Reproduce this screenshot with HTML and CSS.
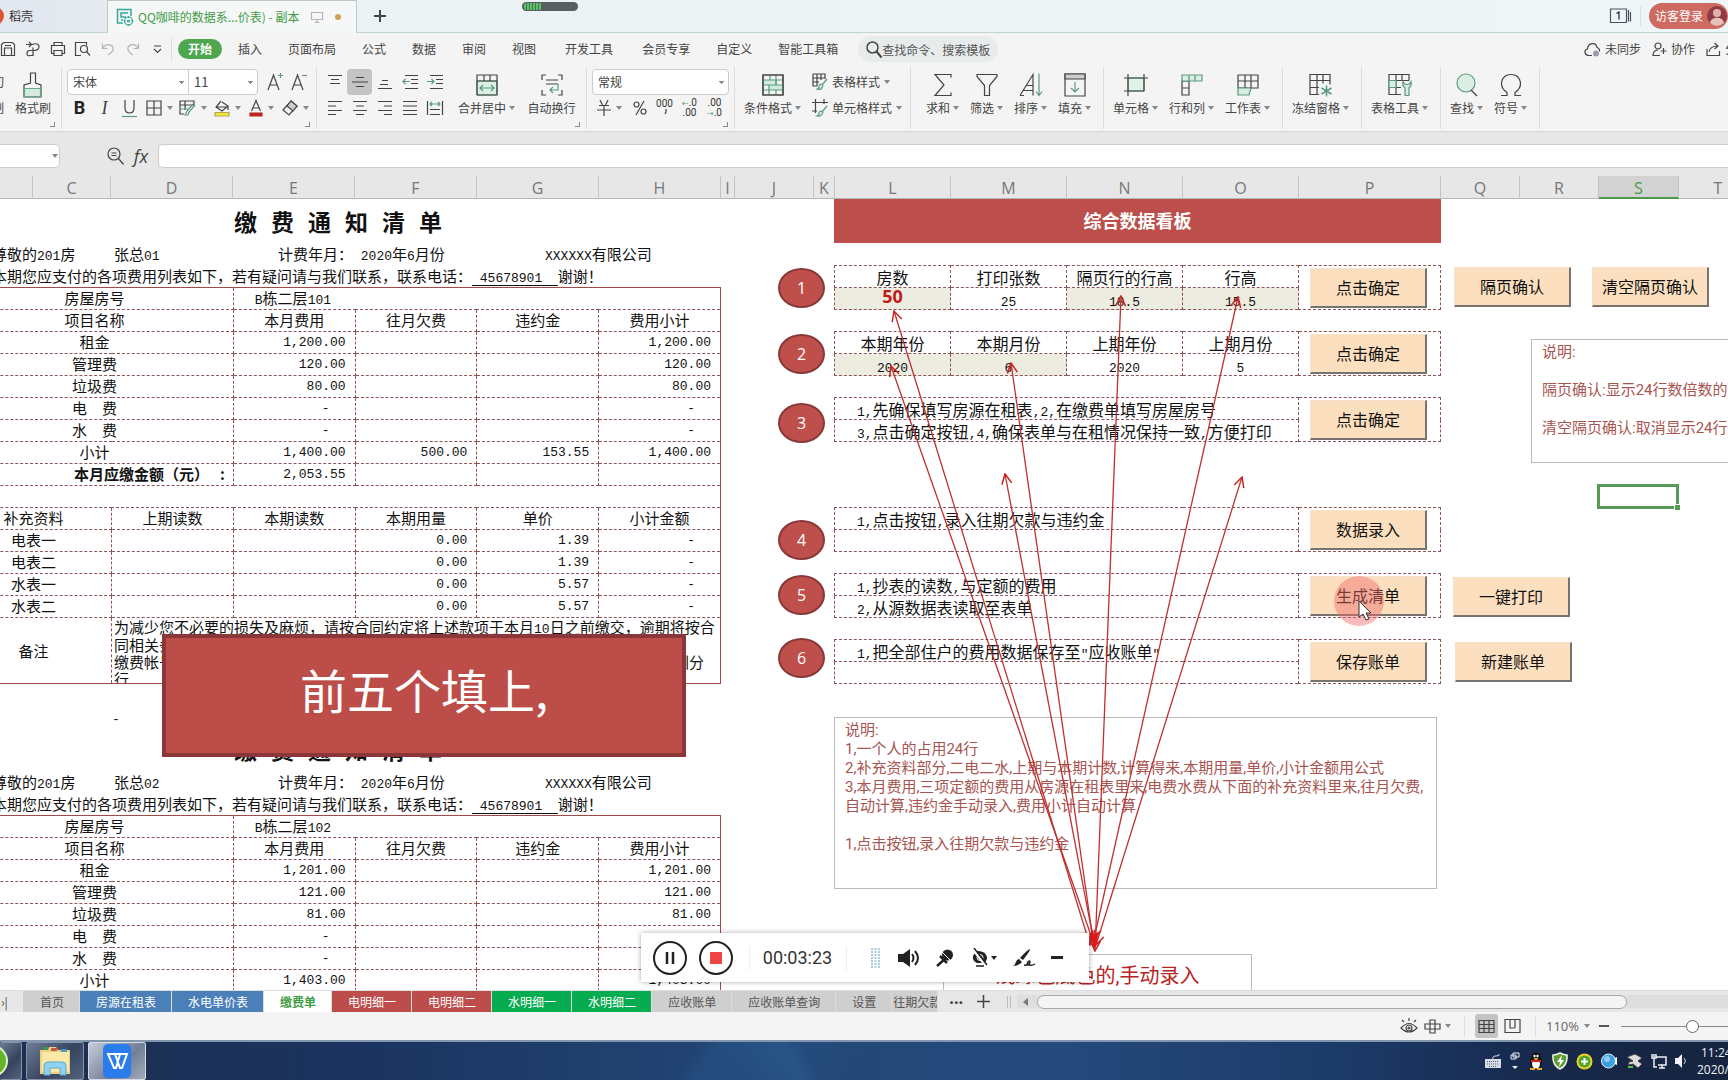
FILE: index.html
```html
<!DOCTYPE html>
<html lang="zh-CN">
<head>
<meta charset="utf-8">
<title>QQ咖啡的数据系统 - 缴费单</title>
<link rel="stylesheet" href="styles.css">
</head>
<body>
<div class="app">

<header class="titlebar">
  <div class="doc-tab docer"><svg width="8" height="18"><circle cx="-5" cy="9" r="9" fill="#e0522b"/></svg><span>稻壳</span></div>
  <div class="doc-tab current">
    <svg class="ic teal" width="18" height="18" viewBox="0 0 18 18"><path d="M7 15H1.500V1.500H15V8M12 5H5v4h5M5 12h2" stroke-width="1.500"/><circle cx="12.500" cy="13" r="4"/><circle cx="12.500" cy="13" r="1"/><path d="M12.500 8v2M12.500 16v2M7.500 13h2M15.500 13h2"/></svg>
    <span>QQ咖啡的数据系...价表) - 副本</span>
    <svg class="ic faint" width="12" height="12" viewBox="0 0 12 12"><path d="M.5 1.500h11v7H.5zM6 8.500v3M3.500 11.500h5"/></svg>
    <i class="unsaved"></i>
  </div>
  <button class="new-tab" aria-label="新建标签"><svg class="ic" width="14" height="14" viewBox="0 0 14 14"><path d="M7 1v12M1 7h12" stroke-width="2"/></svg></button>
  <div class="window-tools">
    <svg class="ic" width="22" height="16" viewBox="0 0 22 16"><path d="M.5 1h16v13.500h-16zM18.500 2v11.500M20.500 4v9.500" stroke="#455560"/><path d="M6.500 5.500 9 4v7.500" stroke="#222"/></svg>
    <i class="vline"></i>
    <button class="login">访客登录<svg width="20" height="20" viewBox="0 0 20 20"><circle cx="10" cy="10" r="10" fill="#8d3d43"/><circle cx="10" cy="7" r="4" fill="#e3b0ac"/><path d="M3 17c1-7 13-7 14 0q-7 6-14 0" fill="#e9bfbb"/></svg></button>
  </div>
</header>
<div class="capsule"><i></i></div>

<nav class="menubar">
  <div class="quick">
    <button aria-label="保存"><svg class="ic" width="16" height="16" viewBox="0 0 16 16"><path d="M1.500 14.500v-11l2-2h9l2 2v11zM4.500 14v-7h7v7M5 4.500h6"/></svg></button>
    <button aria-label="输出"><svg class="ic" width="16" height="16" viewBox="0 0 16 16"><path d="M1 3.500h5M4 1l2.500 2.500L4 6M7 3.500C16 0 16 10 9 9.500H5q-3 0-3 3t3 2h3V6.500"/></svg></button>
    <button aria-label="打印"><svg class="ic" width="16" height="16" viewBox="0 0 16 16"><path d="M4 4.500v-3h8v3M4 12.500H1.500v-8h13v8H12M4 9.500h8v5H4z"/></svg></button>
    <button aria-label="打印预览"><svg class="ic" width="17" height="16" viewBox="0 0 17 16"><path d="M7 14.500H1.500v-13h11V4"/><circle cx="10" cy="8" r="3.500"/><path d="m12.500 10.500 3.500 4"/></svg></button>
    <button aria-label="撤销" disabled><svg class="ic faint" width="14" height="14" viewBox="0 0 14 14"><path d="M1.500 1.500v5h5M2 6C6 0 13 3 12 8q-1 3-5 5"/></svg></button>
    <button aria-label="恢复" disabled><svg class="ic faint" width="14" height="14" viewBox="0 0 14 14"><path d="M12.500 1.500v5h-5M12 6C8 0 1 3 2 8q1 3 5 5"/></svg></button>
    <button aria-label="自定义快速访问"><svg class="ic" width="9" height="9" viewBox="0 0 9 9"><path d="M1 1h7M1 4l3.500 3.500L8 4"/></svg></button>
  </div>
  <div class="menus">
    <a class="on" href="#">开始</a><a href="#">插入</a><a href="#">页面布局</a><a href="#">公式</a><a href="#">数据</a><a href="#">审阅</a><a href="#">视图</a><a class="far" href="#">开发工具</a><a class="far" href="#">会员专享</a><a href="#">自定义</a><a href="#">智能工具箱</a>
  </div>
  <label class="search"><svg class="ic" width="16" height="17" viewBox="0 0 16 17"><circle cx="6.500" cy="6.500" r="5.500" stroke-width="1.500"/><path d="m10.500 10.500 5 6" stroke-width="2"/></svg><input type="text" placeholder="查找命令、搜索模板" aria-label="查找命令、搜索模板"></label>
  <div class="share">
    <a href="#"><svg class="ic" width="17" height="15" viewBox="0 0 17 15"><path d="M8 13.500H4.500C0 13 0 7.500 3.500 7 4 0 12 0 13 5.500q3 1 2.500 4"/><circle cx="12" cy="11.500" r="3" fill="#99a" stroke="none"/></svg>未同步</a>
    <a href="#"><svg class="ic" width="15" height="15" viewBox="0 0 15 15"><circle cx="6" cy="4" r="3"/><path d="M8 13.500H1q0-5 5-5.500M11.500 6v6M8.500 9h6"/></svg>协作</a>
    <a href="#"><svg class="ic" width="15" height="15" viewBox="0 0 15 15"><path d="M1 7v6.500h12.500V9M3 10Q4 4 11.500 4M8.500 1l3.500 3-3.500 3"/></svg>分享</a>
  </div>
</nav>

<section class="ribbon">
  <div class="group g-clip">
    <div class="cut-off"><span>切</span><span>制</span></div>
    <button class="big"><svg class="ic" width="20" height="26" viewBox="0 0 20 26"><path d="M7.500 1h5v10l5.500 2v12H1V13l6.500-2z"/><path d="M1.500 16.500h16v8h-16z" fill="#d5ebdf" stroke="#6ba58b"/></svg><span>格式刷</span></button>
    <i class="corner"></i>
  </div>
  <div class="group g-font">
    <div class="line">
      <select class="font-name" aria-label="字体"><option>宋体</option></select><select class="font-size" aria-label="字号"><option>11</option></select>
      <button class="glyph" aria-label="增大字号"><svg class="ic" width="17" height="18" viewBox="0 0 17 18"><path d="M1 17 6.500 2 12 17M3 12h7"/><path class="gr" d="M13.500 0v5M11 2.500h5"/></svg></button>
      <button class="glyph" aria-label="减小字号"><svg class="ic" width="17" height="18" viewBox="0 0 17 18"><path d="M1 17 6.500 2 12 17M3 12h7"/><path class="gr" d="M11 2.500h5"/></svg></button>
    </div>
    <div class="line tools">
      <button class="bold">B</button>
      <button class="italic">I</button>
      <button aria-label="下划线"><svg class="ic" width="15" height="17" viewBox="0 0 15 17"><path d="M3 0v8q0 5 4.500 5T12 8V0"/><path class="gr" d="M0 16.500h15"/></svg></button>
      <button class="drop" aria-label="边框"><svg class="ic" width="16" height="16" viewBox="0 0 16 16"><path d="M1 1h14v14H1zM8 1v14M1 8h14"/></svg><i class="caret"></i></button>
      <button class="drop" aria-label="表格样式"><svg class="ic" width="17" height="16" viewBox="0 0 17 16"><path d="M10 1H1v13h4M1 5h14V1H6v9"/><path class="gr" d="m16 5-6 7-1 3-3 0 2-4 6-7M2 9h7"/></svg><i class="caret"></i></button>
      <button class="drop" aria-label="填充颜色"><svg class="ic" width="16" height="17" viewBox="0 0 16 17"><path d="M7 1 2 7l6 4 6-5-6-4M2 7h11M14 6v4"/><path d="M1 12.500h14V16H1z" fill="#f0e840" stroke="#b3a94c"/></svg><i class="caret"></i></button>
      <button class="drop" aria-label="字体颜色"><svg class="ic" width="14" height="17" viewBox="0 0 14 17"><path d="M2.500 11 7 .500 11.500 11M4 8h6"/><path d="M1 13h12v3H1z" fill="#b92727" stroke="#b92727"/></svg><i class="caret"></i></button>
      <button class="drop" aria-label="清除"><svg class="ic" width="16" height="16" viewBox="0 0 16 16"><path d="m9 1 6 5-8 9-6-5z"/><path d="m9 1 6 5-4 5-6-5z" fill="#ccc"/></svg><i class="caret"></i></button>
    </div>
    <i class="corner"></i>
  </div>
  <div class="group g-align">
    <div class="align-grid">
      <button aria-label="顶端对齐"><svg class="ic" width="16" height="16" viewBox="0 0 16 16"><path d="M1 1.500h14M4 5.500h8M3 9.500h10" /></svg></button>
      <button class="pressed" aria-label="垂直居中"><svg class="ic" width="16" height="16" viewBox="0 0 16 16"><path d="M4 3.500h8M0 8h16M4 12.500h8"/></svg></button>
      <button aria-label="底端对齐"><svg class="ic" width="16" height="16" viewBox="0 0 16 16"><path d="M5 6.500h6M3 10.500h8M1 14.500h14"/></svg></button>
      <button aria-label="减少缩进"><svg class="ic" width="16" height="16" viewBox="0 0 16 16"><path d="M3 1.500h13M9 5.500h7M9 9.500h7M3 14.500h13"/><path class="gr" d="M8 7.500H1M3.500 5 1 7.500 3.500 10"/></svg></button>
      <button aria-label="增加缩进"><svg class="ic" width="16" height="16" viewBox="0 0 16 16"><path d="M3 1.500h13M9 5.500h7M9 9.500h7M3 14.500h13"/><path class="gr" d="M0 7.500h7M4.500 5 7 7.500 4.500 10"/></svg></button>
      <button aria-label="左对齐"><svg class="ic" width="16" height="16" viewBox="0 0 16 16"><path d="M1 1.500h14M1 6h8M1 10.500h14M1 14.500h8"/></svg></button>
      <button aria-label="水平居中"><svg class="ic" width="16" height="16" viewBox="0 0 16 16"><path d="M1 1.500h14M4 6h8M1 10.500h14M4 14.500h8"/></svg></button>
      <button aria-label="右对齐"><svg class="ic" width="16" height="16" viewBox="0 0 16 16"><path d="M1 1.500h14M7 6h8M1 10.500h14M7 14.500h8"/></svg></button>
      <button aria-label="两端对齐"><svg class="ic" width="16" height="16" viewBox="0 0 16 16"><path d="M1 1.500h14M1 6h14M1 10.500h14M1 14.500h14"/></svg></button>
      <button aria-label="分散对齐"><svg class="ic" width="16" height="16" viewBox="0 0 16 16"><path d="M.5 1v14M15.500 1v14M3 9.500h10M3 14.500h10"/><path class="gr" d="M3 4h10M5 2 3 4l2 2M11 2l2 2-2 2"/></svg></button>
    </div>
    <button class="big"><svg class="ic" width="22" height="22" viewBox="0 0 22 22"><path d="M1 7h20v14H1z" fill="#dcefe5" class="gr"/><path d="M1 21V1h20v20M1 7h20M8 1v6M14 1v6M1 21h20"/><path class="gr" d="M4 14h14M7 11l-3 3 3 3M15 11l3 3-3 3"/></svg><span>合并居中<i class="caret"></i></span></button>
    <button class="big wrap-text"><svg class="ic" width="22" height="22" viewBox="0 0 22 22"><path d="M5 1H1v5M17 1h4v5M5 21H1v-5M17 21h4v-5M5 6h12M5 10h12"/><path class="gr" d="M17 10v6H9M12 13l-3 3 3 3"/></svg><span>自动换行</span></button>
    <i class="corner"></i>
  </div>
  <div class="group g-number">
    <div class="line"><select class="num-format" aria-label="数字格式"><option>常规</option></select></div>
    <div class="line numtools">
      <button class="drop" aria-label="货币"><svg class="ic" width="14" height="16" viewBox="0 0 14 16"><path d="m3 0 2.500 5M11 0 8.500 5M2 5.500h10M0 10h14M7 5.500V16"/></svg><i class="caret"></i></button>
      <button aria-label="百分比"><svg class="ic" width="14" height="14" viewBox="0 0 14 14"><circle cx="3.500" cy="3.500" r="2.500"/><circle cx="10.500" cy="10.500" r="2.500"/><path d="M11 0 3 14"/></svg></button>
      <button class="digits" aria-label="千位分隔"><span>000</span><svg class="ic" width="4" height="8"><path d="M3 0v3L2 5"/></svg></button>
      <button class="digits" aria-label="增加小数位"><span><em>←</em>.0</span><span>.00</span></button>
      <button class="digits" aria-label="减少小数位"><span>.00</span><span><em>→</em>.0</span></button>
    </div>
    <i class="corner"></i>
  </div>
  <div class="group g-style">
    <button class="big"><svg class="ic" width="22" height="22" viewBox="0 0 22 22"><path d="M1 1h20v20H1z"/><path d="M1 6h13v5H1zM7 11h14v5H7z" fill="#d0ebdc" class="gr"/><path class="gr" d="M8 1v5M14 1v5h7M14 11V6M7 16v5M14 16v5M1 16h6"/><path d="M1 1h20v20H1z"/></svg><span>条件格式<i class="caret"></i></span></button>
    <div class="stack">
      <button class="drop"><svg class="ic" width="16" height="18" viewBox="0 0 16 18"><path d="M1 1h12v5M1 1v12h4M1 5h12M1 9h6M5 1v12M9 1v6"/><path class="gr" d="m15 6-5 6M10 11q-4 0-3 4l-2 1q5 2 6-4" fill="#d0ebdc"/></svg>表格样式<i class="caret"></i></button>
      <button class="drop"><svg class="ic" width="16" height="18" viewBox="0 0 16 18"><path d="M3.500 0v14M0 3.500h16M12 0v5M0 12h5"/><path class="gr" d="m15 7-5 6M10 12q-4 0-3 4l-2 1q5 1 6-4" fill="#d0ebdc"/></svg>单元格样式<i class="caret"></i></button>
    </div>
  </div>
  <div class="group g-data">
    <button class="big"><svg class="ic" width="18" height="23" viewBox="0 0 18 23"><path d="M17 4V1H1l9 10.500L1 22h16v-3"/></svg><span>求和<i class="caret"></i></span></button>
    <button class="big"><svg class="ic" width="22" height="23" viewBox="0 0 22 23"><path d="M1 1h20v2l-7.500 9v10h-5V12L1 3z"/></svg><span>筛选<i class="caret"></i></span></button>
    <button class="big"><svg class="ic" width="24" height="23" viewBox="0 0 24 23"><path d="M1 22 14 1v21M4 17h10M7 12h7M1 22h4"/><path class="gr" d="M20 0v22M17 18l3 4 3-4"/></svg><span>排序<i class="caret"></i></span></button>
    <button class="big"><svg class="ic" width="22" height="24" viewBox="0 0 22 24"><path d="M1 1h20v22H1z"/><path d="M1 1h20v5H1z" fill="#ccc"/><path class="gr" d="M11 9v10M7 15l4 4 4-4"/></svg><span>填充<i class="caret"></i></span></button>
  </div>
  <div class="group g-cells">
    <button class="big"><svg class="ic" width="24" height="22" viewBox="0 0 24 22"><path d="M4 4h16v13H4z" fill="#e0f1e8" class="gr"/><path d="M4 0v22M0 4h24M0 17h20M20 0v17"/></svg><span>单元格<i class="caret"></i></span></button>
    <button class="big"><svg class="ic" width="22" height="22" viewBox="0 0 22 22"><path d="M1 7h7v14H1zM1 14h7"/><path d="M1 1h20v6H1zM8 1v6M14 1v6" fill="#d8eee2" class="gr"/></svg><span>行和列<i class="caret"></i></span></button>
    <button class="big"><svg class="ic" width="22" height="22" viewBox="0 0 22 22"><path d="M1 14V1h20v13zM1 7h20M8 1v13M14 1v13"/><path d="M1 14h13l-2 7H1z" fill="#d8eee2" class="gr"/></svg><span>工作表<i class="caret"></i></span></button>
  </div>
  <div class="group g-one">
    <button class="big"><svg class="ic" width="24" height="23" viewBox="0 0 24 23"><path d="M21 11V1H1v20h9M1 7h20M1 14h9M8 1v20M14 1v9"/><path class="gr" d="M17.500 12v11M12.500 14.500l10 6M22.500 14.500l-10 6" stroke-width="1.500"/></svg><span>冻结窗格<i class="caret"></i></span></button>
  </div>
  <div class="group g-one">
    <button class="big"><svg class="ic" width="24" height="23" viewBox="0 0 24 23"><path d="M21 7V1H1v20h12M1 7h20M8 1v20M14 1v6M1 14h12"/><path d="M1 7h7v7H1z" fill="#d8eee2" class="gr"/><path d="M15 8q-1 5 2 6v8h4v-8q3-1 2-6l-2 3h-4z" fill="#d8eee2" class="gr"/></svg><span>表格工具<i class="caret"></i></span></button>
  </div>
  <div class="group g-find">
    <button class="big"><svg class="ic" width="22" height="24" viewBox="0 0 22 24"><circle cx="10" cy="10" r="9" fill="#dcefe5" class="gr"/><path d="m15 17 6 6"/></svg><span>查找<i class="caret"></i></span></button>
    <button class="big"><svg class="ic" width="22" height="23" viewBox="0 0 22 23"><path d="M1 22h6v-3Q1 15 1.500 9 3 1 11 1t9.500 8q.5 6-5.500 10v3h6"/></svg><span>符号<i class="caret"></i></span></button>
  </div>
</section>

<section class="formula">
  <input class="name-box" type="text" aria-label="名称框"><i class="caret"></i>
  <svg class="ic" width="17" height="18" viewBox="0 0 17 18"><circle cx="7" cy="7" r="6"/><path d="m11.500 11.500 5 6M4.500 6h5M4.500 8.500h5"/></svg>
  <button class="fx">fx</button>
  <input class="formula-input" type="text" aria-label="编辑栏">
</section>

<div class="col-heads">
  <span></span><span>C</span><span>D</span><span>E</span><span>F</span><span>G</span><span>H</span><span>I</span><span>J</span><span>K</span><span>L</span><span>M</span><span>N</span><span>O</span><span>P</span><span>Q</span><span>R</span><span class="sel">S</span><span>T</span>
</div>

<main class="sheet">
  <div class="bills">
    <article class="bill">
      <h2>缴费通知清单</h2>
      <div class="meta"><span>尊敬的<b>201</b>房</span><span>张总<b>01</b></span><span>计费年月：<b> 2020</b>年<b>6</b>月份</span><span><b>XXXXXX</b>有限公司</span></div>
      <div class="meta"><span class="whole">本期您应支付的各项费用列表如下，若有疑问请与我们联系，联系电话：<u><b> 45678901  </b></u>谢谢！</span></div>
      <table>
        <colgroup><col class="c-first"><col><col><col><col><col></colgroup>
        <tr><td colspan="2">房屋房号</td><td colspan="4" class="room"><b>B</b>栋二层<b>101</b></td></tr>
        <tr><td colspan="2">项目名称</td><td>本月费用</td><td>往月欠费</td><td>违约金</td><td>费用小计</td></tr>
        <tr><td colspan="2">租金</td><td class="num">1,200.00</td><td></td><td></td><td class="num">1,200.00</td></tr>
        <tr><td colspan="2">管理费</td><td class="num">120.00</td><td></td><td></td><td class="num">120.00</td></tr>
        <tr><td colspan="2">垃圾费</td><td class="num">80.00</td><td></td><td></td><td class="num">80.00</td></tr>
        <tr><td colspan="2">电　费</td><td class="num nil">-</td><td></td><td></td><td class="num nil">-</td></tr>
        <tr><td colspan="2">水　费</td><td class="num nil">-</td><td></td><td></td><td class="num nil">-</td></tr>
        <tr><td colspan="2">小计</td><td class="num">1,400.00</td><td class="num">500.00</td><td class="num">153.55</td><td class="num">1,400.00</td></tr>
        <tr><td colspan="2" class="due">本月应缴金额（元）　 :</td><td class="num">2,053.55</td><td></td><td></td><td></td></tr>
        <tr><td colspan="6"></td></tr>
        <tr><td>补充资料</td><td>上期读数</td><td>本期读数</td><td>本期用量</td><td>单价</td><td>小计金额</td></tr>
        <tr><td>电表一</td><td></td><td></td><td class="num">0.00</td><td class="num">1.39</td><td class="num nil">-</td></tr>
        <tr><td>电表二</td><td></td><td></td><td class="num">0.00</td><td class="num">1.39</td><td class="num nil">-</td></tr>
        <tr><td>水表一</td><td></td><td></td><td class="num">0.00</td><td class="num">5.57</td><td class="num nil">-</td></tr>
        <tr><td>水表二</td><td></td><td></td><td class="num">0.00</td><td class="num">5.57</td><td class="num nil">-</td></tr>
        <tr><td class="note-label">备注</td><td colspan="5" class="note"><div><p>为减少您不必要的损失及麻烦，请按合同约定将上述款项于本月<b>10</b>日之前缴交，逾期将按合</p><p>同相关条款</p><p class="bank"><span>缴费帐号</span><span>深圳分</span></p><p>行</p></div></td></tr>
      </table>
      <p class="tail"><b>-</b></p>
    </article>
    <article class="bill">
      <h2>缴费通知清单</h2>
      <div class="meta"><span>尊敬的<b>201</b>房</span><span>张总<b>02</b></span><span>计费年月：<b> 2020</b>年<b>6</b>月份</span><span><b>XXXXXX</b>有限公司</span></div>
      <div class="meta"><span class="whole">本期您应支付的各项费用列表如下，若有疑问请与我们联系，联系电话：<u><b> 45678901  </b></u>谢谢！</span></div>
      <table>
        <colgroup><col class="c-first"><col><col><col><col><col></colgroup>
        <tr><td colspan="2">房屋房号</td><td colspan="4" class="room"><b>B</b>栋二层<b>102</b></td></tr>
        <tr><td colspan="2">项目名称</td><td>本月费用</td><td>往月欠费</td><td>违约金</td><td>费用小计</td></tr>
        <tr><td colspan="2">租金</td><td class="num">1,201.00</td><td></td><td></td><td class="num">1,201.00</td></tr>
        <tr><td colspan="2">管理费</td><td class="num">121.00</td><td></td><td></td><td class="num">121.00</td></tr>
        <tr><td colspan="2">垃圾费</td><td class="num">81.00</td><td></td><td></td><td class="num">81.00</td></tr>
        <tr><td colspan="2">电　费</td><td class="num nil">-</td><td></td><td></td><td class="num nil">-</td></tr>
        <tr><td colspan="2">水　费</td><td class="num nil">-</td><td></td><td></td><td class="num nil">-</td></tr>
        <tr><td colspan="2">小计</td><td class="num">1,403.00</td><td></td><td></td><td class="num">1,403.00</td></tr>
      </table>
    </article>
  </div>

  <div class="panel">
    <h1>综合数据看板</h1>
    <table>
      <colgroup><col><col><col><col><col class="c-act"></colgroup>
      <tr><td>房数</td><td>打印张数</td><td>隔页行的行高</td><td>行高</td><td rowspan="2" class="act"><button class="ole">点击确定</button></td></tr>
      <tr><td class="fill hot">50</td><td><b>25</b></td><td class="fill"><b>18.5</b></td><td class="fill"><b>15.5</b></td></tr>
    </table>
    <table>
      <colgroup><col><col><col><col><col class="c-act"></colgroup>
      <tr><td>本期年份</td><td>本期月份</td><td>上期年份</td><td>上期月份</td><td rowspan="2" class="act"><button class="ole">点击确定</button></td></tr>
      <tr><td class="fill"><b>2020</b></td><td class="fill"><b>6</b></td><td><b>2020</b></td><td><b>5</b></td></tr>
    </table>
    <table class="before-gap">
      <colgroup><col><col><col><col><col class="c-act"></colgroup>
      <tr><td colspan="4" class="step"><b>1,</b>先确保填写房源在租表<b>,2,</b>在缴费单填写房屋房号</td><td rowspan="2" class="act"><button class="ole">点击确定</button></td></tr>
      <tr><td colspan="4" class="step"><b>3,</b>点击确定按钮<b>,4,</b>确保表单与在租情况保持一致<b>,</b>方便打印</td></tr>
    </table>
    <table>
      <colgroup><col><col><col><col><col class="c-act"></colgroup>
      <tr><td colspan="4" class="step"><b>1,</b>点击按钮<b>,</b>录入往期欠款与违约金</td><td rowspan="2" class="act"><button class="ole">数据录入</button></td></tr>
      <tr><td colspan="4"></td></tr>
    </table>
    <table>
      <colgroup><col><col><col><col><col class="c-act"></colgroup>
      <tr><td colspan="4" class="step"><b>1,</b>抄表的读数<b>,</b>与定额的费用</td><td rowspan="2" class="act"><button class="ole">生成清单</button></td></tr>
      <tr><td colspan="4" class="step"><b>2,</b>从源数据表读取至表单</td></tr>
    </table>
    <table>
      <colgroup><col><col><col><col><col class="c-act"></colgroup>
      <tr><td colspan="4" class="step"><b>1,</b>把全部住户的费用数据保存至<b>"</b>应收账单<b>"</b></td><td rowspan="2" class="act"><button class="ole">保存账单</button></td></tr>
      <tr><td colspan="4"></td></tr>
    </table>
    <div class="memo">说明:<br>1,一个人的占用24行<br>2,补充资料部分,二电二水,上期与本期计数,计算得来,本期用量,单价,小计金额用公式<br>3,本月费用,三项定额的费用从房源在租表里来,电费水费从下面的补充资料里来,往月欠费,<br>自动计算,违约金手动录入,费用小计自动计算<br><br>1,点击按钮,录入往期欠款与违约金</div>
  </div>

  <!-- Floating shapes drawn on top of the cells -->
  <span class="disc d1">1</span><span class="disc d2">2</span><span class="disc d3">3</span><span class="disc d4">4</span><span class="disc d5">5</span><span class="disc d6">6</span>
  <button class="ole float f1">隔页确认</button>
  <button class="ole float f2">清空隔页确认</button>
  <button class="ole float f3">一键打印</button>
  <button class="ole float f4">新建账单</button>
  <div class="memo side">说明:<br><br>隔页确认:显示24行数倍数的那些行<br><br>清空隔页确认:取消显示24行数倍数的那些行</div>
  <div class="hint">浅绿色底色的,手动录入</div>
  <i class="cursor-cell"></i>
  <svg class="arrows" width="100%" height="100%">
    <defs><marker id="head" viewBox="0 0 12 12" refX="11" refY="6" markerWidth="12" markerHeight="12" markerUnits="userSpaceOnUse" orient="auto-start-reverse"><path d="M1 1 11 6 1 11" fill="none" stroke="#cc2222" stroke-width="1.500"/></marker></defs>
    <g stroke="#bf3030" stroke-width="1.300">
      <line x1="894" y1="112" x2="1090" y2="746" marker-start="url(#head)" marker-end="url(#head)"/>
      <line x1="891" y1="167" x2="1093" y2="742" marker-start="url(#head)" marker-end="url(#head)"/>
      <line x1="1011" y1="164" x2="1094" y2="748" marker-start="url(#head)" marker-end="url(#head)"/>
      <line x1="1121" y1="97" x2="1095" y2="752" marker-start="url(#head)" marker-end="url(#head)"/>
      <line x1="1238" y1="98" x2="1094" y2="740" marker-start="url(#head)" marker-end="url(#head)"/>
      <line x1="1005" y1="275" x2="1094" y2="744" marker-start="url(#head)" marker-end="url(#head)"/>
      <line x1="1242" y1="278" x2="1096" y2="746" marker-start="url(#head)" marker-end="url(#head)"/>
    </g>
    <path d="m1089 735 6 15 4-18-4 5-3-4z" fill="#e01818"/>
    <circle cx="1359" cy="402" r="25" fill="#f06a6a" fill-opacity=".45"/>
    <path d="M1359 402v16l4-3 3 6 3-1-3-6h5z" fill="#fff" stroke="#333"/>
  </svg>
</main>

<footer class="tabs">
  <span class="nav-end">›|</span>
  <a class="first" href="#">首页</a><a class="blue" href="#">房源在租表</a><a class="blue" href="#">水电单价表</a><a class="active" href="#">缴费单</a><a class="red" href="#">电明细一</a><a class="red" href="#">电明细二</a><a class="green" href="#">水明细一</a><a class="green" href="#">水明细二</a><a href="#">应收账单</a><a href="#">应收账单查询</a><a href="#">设置</a><a class="clip" href="#">往期欠款</a>
  <button class="more">···</button>
  <button class="add" aria-label="新建工作表"><svg class="ic" width="13" height="13" viewBox="0 0 13 13"><path d="M6.500 0v13M0 6.500h13" stroke-width="1.500"/></svg></button>
  <i class="grip"></i>
  <div class="hscroll"><svg width="5" height="8"><path d="M5 0v8L0 4z" fill="#777"/></svg><i></i></div>
</footer>

<div class="status">
  <svg class="ic" width="18" height="16" viewBox="0 0 18 16"><path d="M1 10q8-9 16 0-8 8-16 0zM9 0v3M2 2l2 2M16 2l-2 2"/><circle cx="9" cy="10" r="3"/><circle cx="9" cy="10" r="1"/></svg>
  <button class="drop" aria-label="阅读模式"><svg class="ic" width="17" height="15" viewBox="0 0 17 15"><path d="M6 1h5v13H6zM1 5h15v5H1z"/></svg><i class="caret"></i></button>
  <i class="vline"></i>
  <button class="view on" aria-label="普通视图"><svg class="ic" width="17" height="13" viewBox="0 0 17 13"><path d="M1 .500h15v12H1zM1 4.500h15M1 8.500h15M6 .500v12M11 .500v12"/></svg></button>
  <button class="view page" aria-label="分页预览"><svg class="ic" width="17" height="14" viewBox="0 0 17 14"><path d="M1 .500h15v13H1zM6 .500V9h5M11 .500V9"/></svg></button>
  <i class="vline tight"></i>
  <button class="drop zoom">110%<i class="caret"></i></button>
  <button class="minus" aria-label="缩小"></button>
  <input type="range" min="0" max="100" value="50" aria-label="显示比例">
</div>

<div class="taskbar">
  <button class="task t0" aria-label="浏览器"><svg width="8" height="34" viewBox="0 0 8 34"><circle cx="-8" cy="17" r="15" fill="#66b42b" stroke="#dff0c8" stroke-width="2"/></svg></button>
  <button class="task" aria-label="资源管理器"><svg width="34" height="32" viewBox="0 0 34 32"><path d="M2 5h8l1-3h7l2 3h12v24H2z" fill="#ecd27d"/><path d="M4 7h27v20H4z" fill="#f8e9a6"/><path d="M5 2h5v3H5z" fill="#3b9b54"/><path d="M13 3h6v3h-6z" fill="#c8573d"/><path d="M23 4h6v3h-6z" fill="#4c93ce"/><path d="M6 30v-9q0-4 4-4h14q4 0 4 4v9h-6v-7H12v7z" fill="#8fd2ef" stroke="#5da9d2"/></svg></button>
  <button class="task lit" aria-label="WPS 表格"><svg width="30" height="36" viewBox="0 0 30 36"><rect x="1" y="1" width="28" height="34" rx="5" fill="#2a7cec"/><path d="M6 11h12l-4 14h-2zM13 11h12l-5 14h-2z" fill="none" stroke="#fff" stroke-width="2"/></svg></button>
  <div class="tray">
    <svg width="18" height="16" viewBox="0 0 18 16"><path d="M1 6h16v9H1z" fill="#d6dbe4"/><path d="M3 8.500h12M3 11h12M5 13.500h8" stroke="#56617a" stroke-dasharray="1 1"/><path d="M9 6q-1-3 3-3t3-2" fill="none" stroke="#d6dbe4"/></svg>
    <svg width="10" height="18" viewBox="0 0 10 18"><path d="M3 1h6v4H3zM1 3h5v4H1z" fill="#1d2d4f" stroke="#e9edf5"/><path d="M2 14h6l-3 3z" fill="#e9edf5"/></svg>
    <svg width="16" height="18" viewBox="0 0 16 18"><ellipse cx="8" cy="10" rx="6" ry="7" fill="#111"/><circle cx="8" cy="5" r="4.500" fill="#111"/><ellipse cx="8" cy="12" rx="4" ry="4.500" fill="#fff"/><path d="M3 8h10v2H3z" fill="#d9261c"/><path d="M5 6h6L8 8z" fill="#f1a61e"/><circle cx="6.500" cy="4" r="1.200" fill="#fff"/><circle cx="9.500" cy="4" r="1.200" fill="#fff"/><path d="M2 16h5v2H2zM9 16h5v2H9z" fill="#f1a61e"/></svg>
    <svg width="16" height="18" viewBox="0 0 16 18"><path d="M8 1q4 2 7 2 1 10-7 14Q0 13 1 3q3 0 7-2z" fill="#5c9b35" stroke="#eef5e6" stroke-width="1.500"/><path d="M10 3 5 10h3l-1 5 5-7H9z" fill="#fff"/></svg>
    <svg width="17" height="17" viewBox="0 0 17 17"><circle cx="8.500" cy="8.500" r="8" fill="#e9d424"/><circle cx="8.500" cy="8.500" r="6" fill="#51a22d"/><path d="M8.500 5v7M5 8.500h7" stroke="#fff" stroke-width="2"/></svg>
    <svg width="17" height="16" viewBox="0 0 17 16"><path d="m12 6 4-2v8l-4-2z" fill="#fff"/><circle cx="7.500" cy="8" r="7" fill="#3b9ede" stroke="#e8f4fc"/><circle cx="6" cy="6" r="3" fill="#8bcdf3"/></svg>
    <svg width="17" height="16" viewBox="0 0 17 16"><path d="m1 4 8-3 7 4-4 3 4 3-4 4-5-4-5 1 1-3 4-1z" fill="#dcdcdc" stroke="#444"/><path d="M2 14h5" stroke="#4ec34e" stroke-width="2"/></svg>
    <svg width="16" height="16" viewBox="0 0 16 16" fill="none" stroke="#edf1f7" stroke-width="1.500"><path d="M5 4h10v8H7M8 15h6M11 12v3M3 1v3M1 1v4h4V1M3 5v9h3"/></svg>
    <svg width="13" height="14" viewBox="0 0 13 14"><path d="M0 4h3l4-4v14l-4-4H0z" fill="#f2f4f8"/><path d="M9 4q3 3 0 6" fill="none" stroke="#c6cedb"/></svg>
    <time><span>11:24</span><span>2020/7/2</span></time>
  </div>
</div>

<!-- Screen recorder: caption and control strip -->
<div class="caption">前五个填上,</div>
<div class="recorder">
  <button class="round" aria-label="暂停"><svg width="12" height="14"><path d="M3 1v12M9 1v12" stroke="#222" stroke-width="2.500"/></svg></button>
  <button class="round" aria-label="停止"><svg width="12" height="12"><path d="M0 0h12v12H0z" fill="#ef4444"/></svg></button>
  <i></i>
  <time>00:03:23</time>
  <i></i>
  <svg class="dots" width="9" height="20"><path d="M1 0v20M4.500 0v20M8 0v20" stroke="#a9cbd9" stroke-dasharray="2 1" stroke-width="2"/></svg>
  <svg width="23" height="18" viewBox="0 0 23 18"><path d="M0 5h5l7-5v18l-7-5H0z" fill="#222"/><path d="M14 5q3 4 0 8M17 2q6 7 0 14" fill="none" stroke="#222" stroke-width="2"/></svg>
  <svg width="18" height="18" viewBox="0 0 18 18"><circle cx="11.500" cy="6" r="5.500" fill="#222"/><path d="m1 17 9-8M4 7l7 7" stroke="#222" stroke-width="2.500"/><path d="m6 3 8 8" stroke="#fff"/></svg>
  <span class="cam"><svg width="16" height="20" viewBox="0 0 16 20"><path d="M4 3q9-1 11 6 0 4-3 6H5Q0 13 1 8z" fill="#222"/><circle cx="8" cy="9.500" r="3" fill="none" stroke="#fff"/><path d="m1 1 14 18" stroke="#fff" stroke-width="3"/><path d="m2 0 13 17M4 18h8" stroke="#222" stroke-width="1.500"/></svg><svg width="6" height="4"><path d="M0 0h6L3 4z" fill="#222"/></svg></span>
  <svg width="23" height="18" viewBox="0 0 23 18"><path d="M17 0q1 1-7 11l-3-2Q14 1 17 0zM6 10l3 3q-3 4-9 4 2-1 3-4 1-3 3-3z" fill="#222"/><path d="M11 16q5 1 6-3 0-2-2 0t1 3 6-1" fill="none" stroke="#222" stroke-width="1.500"/></svg>
  <svg width="12" height="4"><path d="M0 0h12v3H0z" fill="#222"/></svg>
</div>
</div>
</body>
</html>
```
FILE: styles.css
```css
* { box-sizing: border-box; }
body { margin: 0; font: 12px/16px "Noto Sans CJK SC", sans-serif; color: #444; }
.app { position: relative; display: flex; flex-direction: column; height: 100vh; overflow: hidden; background: #f4f4f4; }
button, input, select { font: inherit; color: inherit; margin: 0; padding: 0; border: 0; background: none; }
button { display: inline-flex; align-items: center; justify-content: center; flex: none; }
a { color: inherit; text-decoration: none; }
svg { display: block; flex: none; }
h1, h2, p { margin: 0; }
.ic { fill: none; stroke: #444; stroke-width: 1.2; overflow: visible; }
.ic .gr { stroke: #5b9a7d; }
.teal { stroke: #35a995; }
.faint { stroke: #b5b5b5; }
.caret { flex: none; display: inline-block; width: 0; height: 0; border: 3px solid transparent; border-top: 4px solid #888; border-bottom: 0; }
.vline { flex: none; width: 1px; height: 20px; background: #ddd; }

/* title bar */
.titlebar { flex: none; display: flex; height: 33px; background: linear-gradient(90deg, #e9f1f4, #eff6f8); border-bottom: 1px solid #c0d2d2; }
.doc-tab { display: flex; align-items: center; gap: 4px; }
.docer { width: 107px; background: linear-gradient(90deg, #e2e7f0, #e6ebf1); gap: 1px; color: #333; }
.doc-tab.current { width: 250px; height: 33px; padding-left: 8px; border: 1px solid #bcc8c8; border-bottom: 0; background: #f6f7f7; color: #3f9c46; }
.current .faint { margin-left: 8px; }
.unsaved { width: 6px; height: 6px; margin-left: 8px; border-radius: 50%; background: #d0a055; }
.new-tab { width: 46px; }
.window-tools { display: flex; align-items: center; gap: 8px; margin-left: auto; }
.login { height: 26px; gap: 4px; padding: 0 1px 0 6px; border-radius: 13px; background: #cd6a62; color: #fff; }
.capsule { position: absolute; left: 522px; top: 2px; width: 56px; height: 9px; padding: 1px 2px; border-radius: 5px; background: #58605f; }
.capsule i { display: block; width: 18px; height: 7px; border-radius: 3px; background: repeating-linear-gradient(90deg, #5fbf6d 0 2px, #3f7a4a 2px 3px); }

/* menu bar */
.menubar { flex: none; display: flex; align-items: center; height: 32px; }
.quick { display: flex; align-items: center; width: 172px; height: 24px; border-right: 1px solid #ddd; }
.quick button { width: 25px; }
.quick button:first-child { width: 16px; margin-right: 4px; }
.menus { display: flex; align-items: center; gap: 26px; padding-left: 6px; white-space: nowrap; }
.menus .on { margin-right: -10px; padding: 2px 10px; border-radius: 10px; background: #4ea64f; color: #fff; font-weight: bold; }
.menus .far { margin-left: 3px; }
.search { display: flex; align-items: center; width: 140px; height: 26px; margin-left: 20px; padding-left: 8px; border-radius: 13px; background: #e8ebec; }
.search input { width: 116px; height: 24px; outline: 0; }
.search input::placeholder { color: #555; opacity: 1; }
.share { display: flex; gap: 11px; margin: 0 -21px 0 auto; white-space: nowrap; }
.share a { display: flex; align-items: center; gap: 4px; }

/* ribbon */
.ribbon { flex: none; display: flex; height: 67px; padding-top: 2px; border-bottom: 1px solid #d8d8d8; white-space: nowrap; }
.group { position: relative; flex: none; display: flex; height: 62px; border-right: 1px solid #dcdcdc; }
.corner { position: absolute; right: 6px; bottom: 2px; width: 5px; height: 5px; border: solid #888; border-width: 0 1px 1px 0; }
.big { flex-direction: column; justify-content: flex-start; gap: 1px; padding-top: 5px; color: #444; }
.big svg { height: 26px; }
.big span { display: flex; align-items: center; gap: 3px; height: 18px; }
.g-clip { width: 62px; }
.cut-off { display: flex; flex-direction: column; gap: 10px; width: 23px; margin-left: -8px; padding-top: 7px; }
.g-font { width: 255px; flex-direction: column; padding: 2px 0 0 5px; }
.line { display: flex; align-items: center; height: 26px; }
select { appearance: none; height: 26px; padding: 0 5px; border: 1px solid #ccc; border-radius: 4px; background: #fff conic-gradient(from -45deg at 50% 100%, #888 90deg, transparent 0) no-repeat right 4px center / 6px 3px; }
.font-name { width: 122px; border-radius: 4px 0 0 4px; }
.font-size { width: 70px; margin-left: -1px; border-radius: 0 4px 4px 0; font-size: 13px; }
.glyph { width: 24px; }
.glyph:first-of-type { margin-left: 5px; }
.tools button { width: 25px; }
.tools .drop { width: 34px; gap: 5px; }
.drop { gap: 5px; }
.tools .bold { font: bold 18px/24px Roboto, sans-serif; color: #222; }
.tools .italic { font: italic 18px/24px "Liberation Serif", serif; }
.g-align { width: 270px; padding-left: 5px; }
.align-grid { display: grid; grid-template-columns: repeat(5, 25px); grid-template-rows: 26px 26px; padding-top: 2px; }
.align-grid .pressed { border-radius: 4px; background: #c4c4c4; }
.g-align .big { margin-left: 12px; width: 55px; }
.g-align .wrap-text { margin-left: 10px; }
.g-number { width: 148px; flex-direction: column; padding: 2px 0 0 5px; }
.num-format { width: 137px; }
.numtools button { width: 25px; }
.numtools .drop { width: 35px; }
.numtools .digits { flex-direction: column; align-items: center; gap: 0; font: 10px/10px Roboto, sans-serif; color: #333; }
.digits em { font: 8px/8px "DejaVu Sans", sans-serif; color: #5b9a7d; }
.g-style { width: 176px; padding-left: 9px; gap: 11px; }
.stack { display: flex; flex-direction: column; align-items: flex-start; gap: 6px; padding-top: 5px; }
.stack button { height: 20px; gap: 4px; }
.g-data { width: 193px; padding-left: 15px; gap: 11px; }
.g-cells { width: 179px; padding-left: 9px; gap: 11px; }
.g-one { width: 79px; padding-left: 9px; }
.g-find { width: 99px; padding-left: 9px; gap: 11px; }

/* formula bar and column heads */
.formula { flex: none; display: flex; align-items: center; height: 44px; padding: 4px 0 1px; background: #e7e7e7; }
.name-box { width: 61px; height: 24px; margin-left: -1px; border: 1px solid #ccc; border-radius: 0 5px 5px 0; background: #fff; }
.name-box + .caret { margin: 0 49px 0 -8px; }
.fx { width: 34px; font: italic 18px/24px "Open Sans", sans-serif; }
.formula-input { flex: 1; height: 24px; border: 1px solid #ccc; border-right: 0; border-radius: 5px 0 0 5px; background: #fff; }
.col-heads { flex: none; display: grid; grid-template-columns: 33px 78px repeat(5, 122px) 14px 79px 21px repeat(4, 116px) 142px 79px 79px 80px minmax(79px, 1fr); height: 23px; border-bottom: 1px solid #b5b5b5; background: #e7e7e7; font: 16px/25px "Open Sans", sans-serif; color: #777; text-align: center; }
.col-heads span { border-right: 1px solid #c4c4c4; }
.col-heads .sel { height: 23px; border-bottom: 2px solid #4e984e; background: #d2d2d2; color: #3f9c46; }

/* worksheet */
.sheet { position: relative; flex: 1; min-height: 0; display: flex; overflow: hidden; background: #fff; color: #111; font-size: 15px; line-height: 20px; }
.sheet b { font: 13px/1 "Liberation Mono", monospace; white-space: pre; }
.bills { flex: none; width: 721px; }
.bill { width: 766px; margin-left: -45px; }
.bill h2 { display: flex; justify-content: center; height: 44px; padding-left: 14px; font: bold 23px/44px "Noto Sans CJK SC", sans-serif; letter-spacing: 14px; }
.meta { display: grid; grid-template-columns: 159px 164px 267px 1fr; height: 22px; line-height: 21px; white-space: nowrap; }
.meta span:first-child { padding-left: 37px; }
.meta .whole { grid-column: 1 / -1; }
.meta u { text-underline-offset: 3px; }
table { table-layout: fixed; border-collapse: collapse; width: 100%; }
td { height: 22px; padding: 0; border: 1px dashed #8d5656; text-align: center; white-space: nowrap; }
.bill table { border: 1px solid #a04a4a; margin-bottom: -1px; }
.bill td { line-height: 19px; vertical-align: top; }
.c-first { width: 156px; }
.bill .num { padding-right: 9px; font: 13px/21px "Liberation Mono", monospace; text-align: right; }
.bill .nil { padding-right: 25px; }
.bill .room { padding-left: 21px; text-align: left; }
.bill .due { padding-right: 8px; font-weight: bold; text-align: right; }
.bill .note-label { vertical-align: middle; }
.note div { height: 65px; padding-left: 2px; overflow: hidden; line-height: 17px; text-align: left; }
.note .bank { display: flex; justify-content: space-between; width: 590px; }
.tail { height: 44px; padding: 24px 0 0 157px; }

.panel { flex: none; width: 607px; margin-left: 113px; font-size: 16px; }
.panel h1 { height: 44px; margin-bottom: 22px; background: #bc4f4b; color: #fff; font: bold 18px/42px "Noto Sans CJK SC", sans-serif; text-align: center; }
.panel table { margin-bottom: 21px; }
.panel .before-gap { margin-bottom: 65px; }
.c-act { width: 142px; }
.panel .fill { background: #ecece0; }
.panel .hot { vertical-align: top; font: bold 18px/16px "Open Sans", sans-serif; color: #c21a1a; }
.panel .step { padding-left: 22px; text-align: left; }
.panel .act { padding: 0 0 1px 11px; vertical-align: bottom; }
.act .ole { display: flex; }
.ole { width: 117px; height: 40px; padding-bottom: 2px; border: solid; border-width: 1px 2px 2px 1px; border-color: #f6e3cd #77736f #77736f #f6e3cd; background: #fcdfbe; color: #111; font-size: 16px; }
.memo { width: 603px; height: 172px; margin-top: 33px; padding: 3px 10px; border: 1px solid #bbb; background: #fff; color: #a8544f; font: 15px/19px Roboto, "Noto Sans CJK SC", sans-serif; white-space: nowrap; }

.disc { position: absolute; left: 778px; width: 47px; height: 40px; border: 2px solid #87393a; border-radius: 50%; background: #bf4f4b; color: #fff; font: 16px/36px "Open Sans", sans-serif; text-align: center; }
.d1 { top: 69px; } .d2 { top: 135px; } .d3 { top: 204px; } .d4 { top: 321px; } .d5 { top: 376px; } .d6 { top: 439px; }
.float { position: absolute; }
.f1 { left: 1454px; top: 68px; } .f2 { left: 1592px; top: 68px; } .f3 { left: 1453px; top: 378px; } .f4 { left: 1455px; top: 443px; }
.memo.side { position: absolute; left: 1531px; top: 140px; width: 320px; height: 124px; margin: 0; }
.hint { position: absolute; left: 943px; top: 755px; width: 309px; height: 60px; border: 1px solid #bbb; background: #fff; color: #b92222; font: 20px/42px Roboto, "Noto Sans CJK SC", sans-serif; text-align: center; }
.cursor-cell { position: absolute; left: 1597px; top: 285px; width: 82px; height: 25px; border: 3px solid #569a56; }
.cursor-cell::after { content: ""; position: absolute; right: -4px; bottom: -4px; width: 5px; height: 5px; border: solid #fff; border-width: 1px 0 0 1px; background: #569a56; }
.arrows { position: absolute; left: 0; top: 0; pointer-events: none; }

/* sheet tabs */
.tabs { flex: none; display: flex; height: 22px; background: #e7e7e7; border-top: 1px solid #ddd; line-height: 21px; white-space: nowrap; }
.nav-end { flex: none; width: 23px; padding-left: 1px; }
.tabs a { flex: none; padding: 0 15px 0 16px; border-right: 1px solid #ddd; background: #cfcfcf; color: #555; }
.tabs .first { padding-left: 17px; }
.tabs .blue { background: #4a7fb8; color: #fff; }
.tabs .red { background: #bd4d4a; color: #fff; }
.tabs .green { background: #07ab50; color: #fff; }
.tabs .active { background: #fff; color: #3f9c46; font-weight: bold; }
.tabs .clip { width: 46px; padding: 0 0 0 1px; overflow: hidden; }
.more { width: 36px; font: bold 16px/20px "Open Sans", sans-serif; }
.add { width: 19px; }
.grip { flex: none; width: 4px; height: 12px; margin: 5px 6px 0 14px; border: solid #bbb; border-width: 0 1px; }
.hscroll { flex: 1; min-width: 0; display: flex; align-items: center; padding-left: 6px; background: linear-gradient(#e7e7e7 4px, #dedede 4px 17px, #e7e7e7 17px); }
.hscroll i { width: 590px; height: 14px; margin-left: 9px; border: 1px solid #a8a8a8; border-radius: 7px; background: #f4f4f4; }

/* status bar */
.status { flex: none; display: flex; align-items: center; justify-content: flex-end; gap: 6px; height: 28px; color: #666; }
.status .drop { gap: 4px; }
.status .vline { margin: 0 4px 0 7px; }
.status .tight { margin: 0 4px 0 5px; }
.view { width: 23px; height: 24px; border-radius: 3px; }
.view.on { background: #c4c4c4; }
.view.page { margin-left: -3px; }
.status .zoom { gap: 5px; font: 13px/20px "Open Sans", sans-serif; }
.minus { width: 10px; height: 2px; margin: 0 6px 0 3px; background: #555; }
.status input { appearance: none; flex: none; width: 142px; height: 12px; margin-right: -35px; background: linear-gradient(#888, #888) center / 100% 1px no-repeat; }
.status input::-webkit-slider-thumb { appearance: none; width: 13px; height: 13px; border: 1px solid #666; border-radius: 50%; background: #fff; }

/* taskbar */
.taskbar { flex: none; display: flex; align-items: center; gap: 4px; height: 40px; border-top: 2px solid #8296ae; background: linear-gradient(125deg, transparent 40%, #2e68a433 41%, transparent 50%), linear-gradient(60deg, transparent 42%, #3a76b033 46%, transparent 47%), linear-gradient(90deg, #1d2f50 0, #1b335e 20%, #234878 45%, #24497b 62%, #1c3a68 78%, #17284a 90%, #16243f); }
.task { width: 58px; height: 38px; border: 1px solid #8793a8; border-radius: 2px; background: linear-gradient(135deg, #6f7d94, #35435f 55%, #55637c); }
.task.t0 { width: 22px; justify-content: flex-start; border-left: 0; }
.task.lit { background: linear-gradient(135deg, #c6cdda, #727e95 60%, #a3adbf); border-color: #d5dbe6; }
.tray { display: flex; align-items: center; gap: 8px; margin: 0 -27px 0 auto; color: #f0f3f8; }
.tray time { display: flex; flex-direction: column; margin-left: 1px; width: 58px; font: 12px/17px "Open Sans", sans-serif; }
.tray time span:first-child { padding-left: 4px; }

/* recorder */
.caption { position: absolute; left: 162px; top: 634px; width: 524px; height: 123px; border: 4px solid #8b373a; background: #bc4d49; color: #fff; font: 47px/102px "Noto Sans CJK SC", sans-serif; text-align: center; }
.recorder { position: absolute; left: 641px; top: 933px; display: flex; align-items: center; width: 448px; height: 49px; padding-left: 12px; background: #fff; box-shadow: 0 0 5px #0005; color: #333; }
.round { width: 34px; height: 34px; margin-right: 12px; border: 2px solid #222; border-radius: 50%; }
.recorder i { width: 1px; height: 24px; background: #eee; margin: 0 3px 0 4px; }
.recorder time { width: 81px; font: 18px/24px Roboto, sans-serif; text-align: center; margin: 0 4px; }
.recorder svg { margin-right: 15px; }
.recorder .round svg { margin: 0; }
.recorder .dots { margin: 0 18px 0 21px; }
.cam { display: flex; align-items: center; margin: 0 16px 0 3px; gap: 3px; }
.recorder .cam svg { margin: 0; }
```
